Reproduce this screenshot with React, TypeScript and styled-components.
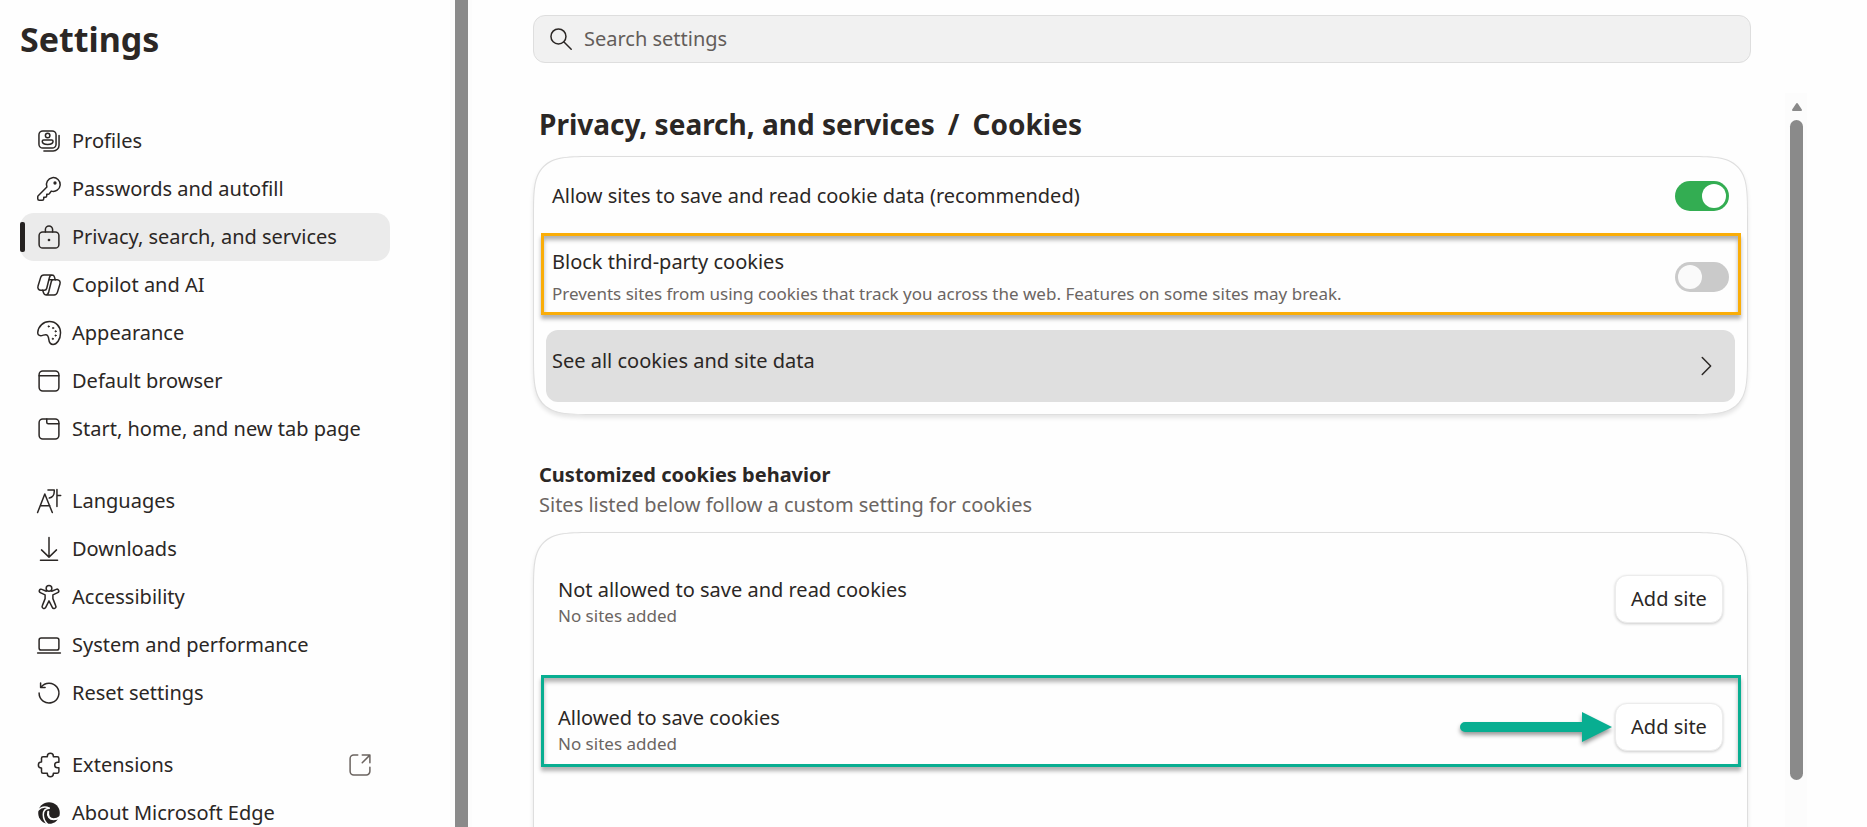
import React, { useState } from "react";
import styled, { createGlobalStyle } from "styled-components";

const GlobalStyle = createGlobalStyle`
  *, *::before, *::after { box-sizing: border-box; }
  body {
    margin: 0;
    background: #fefefe;
    color: #2b2725;
    font-family: "Noto Sans", "Open Sans", sans-serif;
    font-size: 20px;
    line-height: 28px;
  }
  button, input { font: inherit; color: inherit; }
`;

const Page = styled.div`
  display: flex;
  height: 100vh;
  overflow: hidden;
`;

const Sidebar = styled.aside`
  flex: none;
  width: 450px;
  padding: 15px 60px 0 20px;
`;

const AppTitle = styled.h1`
  margin: 0 0 54px;
  font-size: 34px;
  line-height: 48px;
  font-weight: 700;
`;

const NavGroup = styled.ul`
  list-style: none;
  margin: 0 0 24px;
  padding: 0;
`;

const NavLink = styled.a<{ $active?: boolean }>`
  position: relative;
  display: flex;
  align-items: center;
  gap: 8px;
  height: 48px;
  padding: 0 15px 0 14px;
  border-radius: 14px;
  color: inherit;
  text-decoration: none;
  background: ${(p) => (p.$active ? "#ebebeb" : "transparent")};

  &::before {
    content: "";
    display: ${(p) => (p.$active ? "block" : "none")};
    position: absolute;
    left: 0;
    top: 9px;
    width: 5px;
    height: 30px;
    border-radius: 2px;
    background: #242120;
  }
`;

const NavText = styled.span`
  flex: 1;
  white-space: nowrap;
`;

const Icon = styled.svg`
  flex: none;
  width: 30px;
  height: 30px;
  fill: none;
  stroke: #2b2725;
  stroke-width: 1;
  stroke-linecap: round;
  stroke-linejoin: round;
`;

const OpenIcon = styled(Icon)`
  stroke: #6b6460;
`;

const PaneDivider = styled.div`
  flex: none;
  width: 22px;
  padding: 0 4px 0 5px;
  background: #fcfcfc;

  &::before {
    content: "";
    display: block;
    height: 100%;
    background: #8a8a8a;
  }
`;

const Main = styled.main`
  flex: 1;
  min-width: 0;
  display: flex;
  flex-direction: column;
`;

const SearchBox = styled.label`
  flex: none;
  display: flex;
  align-items: center;
  gap: 8px;
  height: 48px;
  margin: 15px 116px 30px 61px;
  padding: 0 12px;
  border: 1px solid #dedede;
  border-radius: 12px;
  background: #f1f1f1;
`;

const SearchInput = styled.input`
  flex: 1;
  min-width: 0;
  padding: 0;
  border: 0;
  outline: 0;
  background: transparent;

  &::placeholder {
    color: #635d5a;
    opacity: 1;
  }
`;

const ScrollArea = styled.div`
  flex: 1;
  min-height: 0;
  display: flex;
  gap: 37px;
  margin: 0 60px 0 61px;
`;

const Content = styled.div`
  flex: 1;
  min-width: 0;
`;

const ScrollTrack = styled.div`
  flex: none;
  display: flex;
  flex-direction: column;
  align-items: center;
  gap: 9px;
  width: 22px;
  padding: 9px 4px 47px 5px;
  background: #fcfcfc;
`;

const ScrollArrow = styled.svg`
  flex: none;
  width: 12px;
  height: 9px;
  fill: #8a8a8a;
  stroke: #8a8a8a;
  stroke-width: 2;
  stroke-linejoin: round;
`;

const ScrollThumb = styled.div`
  flex: 1;
  width: 13px;
  border-radius: 7px;
  background: #8a8a8a;
`;

const PageHeading = styled.h2`
  display: flex;
  gap: 13px;
  margin: 0 0 12px;
  padding: 11px 6px 0;
  font-size: 28px;
  line-height: 40px;
  font-weight: 700;
`;

const Card = styled.section`
  padding: 0 6px 0 7px;
  border: 1px solid #dedede;
  border-radius: 44px;
  background: #fefefe;
  box-shadow: 0 3px 4px rgba(0, 0, 0, 0.1);

  @supports (corner-shape: squircle) {
    border-radius: 64px;
    corner-shape: squircle;
  }
`;

const CookieCard = styled(Card)`
  padding-bottom: 12px;
`;

const SitesCard = styled(Card)`
  display: flex;
  flex-direction: column;
  gap: 36px;
  padding-top: 14px;
  padding-bottom: 140px;
`;

const SettingRow = styled.div<{ $height: number; $highlight?: string; $shift?: number }>`
  display: flex;
  align-items: center;
  justify-content: space-between;
  gap: 16px;
  height: ${(p) => p.$height}px;
  padding: ${(p) => p.$shift ?? 0}px 9px 0 8px;
  border: 3px solid ${(p) => p.$highlight ?? "transparent"};
  box-shadow: ${(p) =>
    p.$highlight ? "0 4px 4px rgba(0, 0, 0, 0.3), inset 0 4px 4px rgba(0, 0, 0, 0.3)" : "none"};
`;

const SiteRow = styled(SettingRow)`
  padding: 0 15px 0 14px;
`;

const RowText = styled.div`
  display: flex;
  flex-direction: column;
  gap: 6px;
`;

const RowLabel = styled.span`
  line-height: 28px;
`;

const RowNote = styled.span`
  font-size: 17px;
  line-height: 24px;
  color: #6b6562;
`;

const Toggle = styled.input`
  appearance: none;
  flex: none;
  width: 54px;
  height: 30px;
  margin: 0;
  padding: 3px;
  border-radius: 15px;
  background: #cacaca;
  display: flex;
  justify-content: flex-start;

  &::before {
    content: "";
    width: 24px;
    height: 24px;
    border-radius: 12px;
    background: #fafafa;
  }

  &:checked {
    background: #33ad52;
    justify-content: flex-end;
  }

  &:checked::before {
    background: #ffffff;
  }
`;

const LinkRow = styled.button`
  display: flex;
  align-items: center;
  justify-content: space-between;
  width: calc(100% - 11px);
  height: 72px;
  margin: 15px 6px 0 5px;
  padding: 0 14px 0 6px;
  border: 0;
  border-radius: 12px;
  background: #dfdfdf;
  text-align: left;
`;

const LinkLabel = styled.span`
  padding-bottom: 10px;
`;

const SectionHead = styled.header`
  margin: 46px 0 13px;
  padding: 0 6px;
`;

const SectionTitle = styled.h3`
  margin: 0 0 2px;
  font-size: 20px;
  line-height: 28px;
  font-weight: 700;
`;

const SectionNote = styled.p`
  margin: 0;
  color: #6b6562;
`;

const SiteText = styled(RowText)`
  gap: 0;
  padding-top: 18px;
`;

const SiteActions = styled.div`
  display: flex;
  align-items: center;
  gap: 2px;
  padding-top: 12px;
`;

const AddButton = styled.button`
  width: 108px;
  height: 48px;
  padding: 0;
  border: 1px solid #ececec;
  border-radius: 12px;
  background: #ffffff;
  box-shadow: 0 1px 3px rgba(0, 0, 0, 0.2);
`;

const PointerArrow = styled.svg`
  width: 153px;
  height: 36px;
  fill: #08ae91;
  filter: drop-shadow(0 3px 2px rgba(0, 0, 0, 0.4));
`;

const icons: Record<string, React.ReactNode> = {
  profiles: (
    <>
      <rect x="3.3" y="3.3" width="11.4" height="11.4" rx="2.6" />
      <path d="M16.7 6.4v6.4a3.9 3.9 0 0 1-3.9 3.9H6.6" />
      <circle cx="9.1" cy="6.4" r="1.5" />
      <path d="M6.4 9.3h5.4c.5 0 .9.4.9.9 0 1.3-1.6 2.1-3.6 2.1s-3.6-.8-3.6-2.1c0-.5.4-.9.9-.9z" />
    </>
  ),
  key: (
    <>
      <path d="M8.6 8.7l-5.8 5.8a1 1 0 0 0-.3.7v1.3a1 1 0 0 0 1 1h2a1 1 0 0 0 1-1v-1h1a1 1 0 0 0 1-1v-1h1a1 1 0 0 0 .7-.3l1.3-1.8A4.6 4.6 0 1 0 8.6 8.7z" />
      <circle cx="14" cy="6" r=".6" fill="#2b2725" />
    </>
  ),
  lock: (
    <>
      <rect x="3.4" y="6.6" width="13.2" height="10.8" rx="2.4" />
      <path d="M7.6 6.6V5a2.4 2.4 0 0 1 4.8 0v1.6" />
      <circle cx="10" cy="12" r=".4" fill="#2b2725" />
    </>
  ),
  copilot: (
    <>
      <path d="M14.2 6.6l-.6-2a1.7 1.7 0 0 0-1.6-1.2H6.600c-1.100 0-1.900.7-2.200 1.700L2.700 10.700c-.5 1.600.4 2.800 1.900 2.800h2.300c.9 0 1.400-.5 1.600-1.300l1.700-6.900c.3-1.100.8-1.900 1.800-1.900" />
      <path d="M5.800 13.500l.6 1.900a1.700 1.700 0 0 0 1.600 1.200h5.400c1.100 0 1.900-.7 2.200-1.700l1.700-5.600c.5-1.600-.4-2.800-1.900-2.800h-2.300c-.9 0-1.400.5-1.600 1.300l-1.700 6.900c-.3 1.100-.8 1.900-1.800 1.900M10.200 6.500h3" />
    </>
  ),
  palette: (
    <>
      <path d="M2.5 9.6c.4-4.3 3.8-7.2 7.8-7.2 4.4 0 7.4 3.3 7.4 7.5 0 4.6-2.7 7.7-5 7.7-1.9 0-2.6-1.2-2.8-3.2-.2-2-.6-3.3-2.1-3.3-1.2 0-2 .7-3.3.7-1.4 0-2.1-.8-2-2.2z" />
      <g fill="#2b2725" strokeWidth=".4">
        <circle cx="9.8" cy="5.6" r=".5" />
        <circle cx="12.7" cy="6.7" r=".5" />
        <circle cx="14.4" cy="8.9" r=".5" />
        <circle cx="14.4" cy="11.7" r=".5" />
        <circle cx="12.5" cy="13.9" r=".5" />
      </g>
    </>
  ),
  browser: (
    <>
      <rect x="3.4" y="3.4" width="13.2" height="13.2" rx="2.4" />
      <path d="M3.4 6.5h13.2" />
    </>
  ),
  tab: (
    <>
      <rect x="3.4" y="3.4" width="13.2" height="13.2" rx="2.4" />
      <path d="M8.5 3.4v2.1a1 1 0 0 0 1 1h7.1" />
    </>
  ),
  languages: (
    <path d="M2.4 17.7L7.2 5.3l5 12.4M4.3 13.2h6.3M9.3 2.6h4.2v1c0 2.4-1.2 3.9-3.3 4.4M15.3 2.3v11.3M15.3 6.4h2.5" />
  ),
  download: <path d="M10 2.3v13M5 10.6l5 4.8 5-4.8M4.3 17.5h11.4" />,
  accessibility: (
    <>
      <circle cx="10" cy="4.3" r="1.9" />
      <path d="M8.2 6.2L5.2 4.9a1.2 1.2 0 0 0-1 2.2L7.4 8.6v2.5l-1.9 4.8a1.2 1.2 0 0 0 2.3 1L10 12.6l2.2 4.3a1.2 1.2 0 0 0 2.3-1l-1.9-4.8V8.6l3.2-1.5a1.2 1.2 0 0 0-1-2.2l-3 1.3" />
    </>
  ),
  laptop: (
    <>
      <rect x="3.4" y="5.4" width="13.2" height="8" rx="1.4" />
      <path d="M2.4 15.4h15.2" />
    </>
  ),
  reset: <path d="M3.4 10a6.6 6.6 0 1 0 1.3-3.9M4.4 3.3v3h3" />,
  puzzle: (
    <path d="M6 4.5h2.9v-.3a2 2 0 0 1 4 0v.3h2.6a1.1 1.1 0 0 1 1.1 1.1v2.5h-.9a1.9 1.9 0 0 0 0 3.8h.9v2.5a1.1 1.1 0 0 1-1.1 1.1h-2.6v.3a2 2 0 0 1-4 0v-.3H6a1 1 0 0 1-1-1V12h-.1a2 2 0 0 1 0-4H5V5.5a1 1 0 0 1 1-1z" />
  ),
  edge: (
    <>
      <circle cx="10" cy="10" r="7.200" fill="#242120" stroke="none" />
      <g stroke="#fefefe">
        <path d="M2.400 8.300c2.200-2.300 5.200-2.900 7.800-1.600" />
        <path d="M10 6.900c-2.300.2-3.800 1.900-3.800 4.300 0 2.500 1.200 4.900 3.200 6.600" />
        <path strokeWidth="1.400" d="M9.500 9.200c-.8 2.900 1 5 3.600 5 1.600 0 2.900-.4 4.200-1.400" />
      </g>
    </>
  ),
};

type NavItem = { icon: string; label: string; active?: boolean; external?: boolean };

const navGroups: NavItem[][] = [
  [
    { icon: "profiles", label: "Profiles" },
    { icon: "key", label: "Passwords and autofill" },
    { icon: "lock", label: "Privacy, search, and services", active: true },
    { icon: "copilot", label: "Copilot and AI" },
    { icon: "palette", label: "Appearance" },
    { icon: "browser", label: "Default browser" },
    { icon: "tab", label: "Start, home, and new tab page" },
  ],
  [
    { icon: "languages", label: "Languages" },
    { icon: "download", label: "Downloads" },
    { icon: "accessibility", label: "Accessibility" },
    { icon: "laptop", label: "System and performance" },
    { icon: "reset", label: "Reset settings" },
  ],
  [
    { icon: "puzzle", label: "Extensions", external: true },
    { icon: "edge", label: "About Microsoft Edge" },
  ],
];

export default function App() {
  const [allow, setAllow] = useState(true);
  const [block, setBlock] = useState(false);

  return (
    <Page>
      <GlobalStyle />
      <Sidebar>
        <AppTitle>Settings</AppTitle>
        <nav>
          {navGroups.map((group, i) => (
            <NavGroup key={i}>
              {group.map((item) => (
                <li key={item.label}>
                  <NavLink href="#" $active={item.active}>
                    <Icon viewBox="0 0 20 20" aria-hidden="true">
                      {icons[item.icon]}
                    </Icon>
                    <NavText>{item.label}</NavText>
                    {item.external && (
                      <OpenIcon viewBox="0 0 20 20" aria-hidden="true">
                        <path d="M8.5 3.4H5.800a2.400 2.400 0 0 0-2.400 2.400v8.400a2.400 2.400 0 0 0 2.400 2.400h8.400a2.400 2.400 0 0 0 2.400-2.400v-2.700M11.500 3.400h5.100v5.100M16.400 3.600l-4.900 4.900" />
                      </OpenIcon>
                    )}
                  </NavLink>
                </li>
              ))}
            </NavGroup>
          ))}
        </nav>
      </Sidebar>
      <PaneDivider />
      <Main>
        <SearchBox>
          <Icon viewBox="0 0 20 20" aria-hidden="true">
            <circle cx="8.300" cy="8.300" r="5" />
            <path d="M12 12l4.800 4.800" />
          </Icon>
          <SearchInput type="search" placeholder="Search settings" aria-label="Search settings" />
        </SearchBox>
        <ScrollArea>
          <Content>
            <PageHeading>
              <span>Privacy, search, and services</span>
              <span>/</span>
              <span>Cookies</span>
            </PageHeading>
            <CookieCard>
              <SettingRow $height={76} $shift={2}>
                <RowLabel as="label" htmlFor="allow">
                  Allow sites to save and read cookie data (recommended)
                </RowLabel>
                <Toggle id="allow" type="checkbox" checked={allow} onChange={() => setAllow(!allow)} />
              </SettingRow>
              <SettingRow $height={82} $shift={5} $highlight="#faad08">
                <RowText>
                  <RowLabel as="label" htmlFor="block">
                    Block third-party cookies
                  </RowLabel>
                  <RowNote>
                    Prevents sites from using cookies that track you across the web. Features on some sites may break.
                  </RowNote>
                </RowText>
                <Toggle id="block" type="checkbox" checked={block} onChange={() => setBlock(!block)} />
              </SettingRow>
              <LinkRow type="button">
                <LinkLabel>See all cookies and site data</LinkLabel>
                <Icon viewBox="0 0 20 20" aria-hidden="true">
                  <path d="M7.500 4.300l5.600 5.700-5.600 5.700" />
                </Icon>
              </LinkRow>
            </CookieCard>
            <SectionHead>
              <SectionTitle>Customized cookies behavior</SectionTitle>
              <SectionNote>Sites listed below follow a custom setting for cookies</SectionNote>
            </SectionHead>
            <SitesCard>
              <SiteRow $height={92}>
                <SiteText>
                  <RowLabel>Not allowed to save and read cookies</RowLabel>
                  <RowNote>No sites added</RowNote>
                </SiteText>
                <SiteActions>
                  <AddButton type="button">Add site</AddButton>
                </SiteActions>
              </SiteRow>
              <SiteRow $height={92} $highlight="#08ae91">
                <SiteText>
                  <RowLabel>Allowed to save cookies</RowLabel>
                  <RowNote>No sites added</RowNote>
                </SiteText>
                <SiteActions>
                  <PointerArrow viewBox="0 0 153 36" aria-hidden="true">
                    <path d="M5 13h117V3l30 15-30 15V23H5a5 5 0 0 1 0-10z" />
                  </PointerArrow>
                  <AddButton type="button">Add site</AddButton>
                </SiteActions>
              </SiteRow>
            </SitesCard>
          </Content>
          <ScrollTrack>
            <ScrollArrow viewBox="0 0 12 9" aria-hidden="true">
              <path d="M6 2l4 6H2z" />
            </ScrollArrow>
            <ScrollThumb />
          </ScrollTrack>
        </ScrollArea>
      </Main>
    </Page>
  );
}
